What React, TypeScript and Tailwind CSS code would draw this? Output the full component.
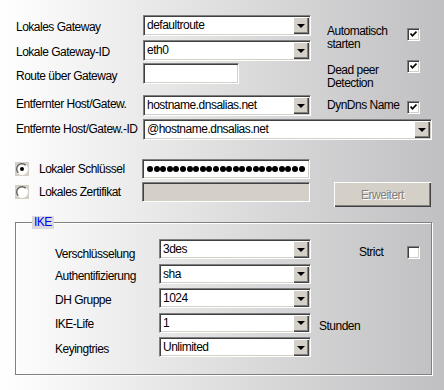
import React from 'react';

const sunken =
  'border border-t-[#808080] border-l-[#808080] border-b-white border-r-white shadow-[inset_1px_1px_0_#404040,inset_-1px_-1px_0_#d4d0c8]';

const Combo: React.FC<{ value: string; className?: string }> = ({ value, className = '' }) => (
  <div className={`flex h-[21px] bg-white p-px ${sunken} ${className}`}>
    <span className="flex-1 truncate pl-[2px] leading-[17px] text-black">{value}</span>
    <div className="flex h-[17px] w-[16px] items-center justify-center bg-[#d4d0c8] shadow-[inset_1px_1px_0_#fff,inset_-1px_-1px_0_#404040,inset_-2px_-2px_0_#808080]">
      <div className="h-0 w-0 border-x-[4px] border-t-[4px] border-x-transparent border-t-black" />
    </div>
  </div>
);

const Check: React.FC<{ on?: boolean }> = ({ on }) => (
  <div className={`flex h-[13px] w-[13px] items-center justify-center bg-white ${sunken}`}>
    {on && (
      <svg width="7" height="7" viewBox="0 0 7 7">
        <path d="M0.5 2.5 L2.5 4.8 L6.5 0.6" fill="none" stroke="black" strokeWidth="1.7" />
      </svg>
    )}
  </div>
);

const Radio: React.FC<{ on?: boolean }> = ({ on }) => (
  <div className="flex h-[14px] w-[14px] items-center justify-center bg-[#d4d0c8]">
    <svg width="12" height="12" viewBox="0 0 12 12">
      <defs>
        <linearGradient id="rg" x1="0" y1="0" x2="1" y2="1">
          <stop offset="0.45" stopColor="#606060" />
          <stop offset="0.55" stopColor="#ffffff" />
        </linearGradient>
      </defs>
      <circle cx="6" cy="6" r="5.3" fill="white" stroke="url(#rg)" strokeWidth="1.4" />
      {on && <circle cx="6" cy="6" r="2" fill="black" />}
    </svg>
  </div>
);

const Label: React.FC<{ text: string; className?: string }> = ({ text, className = '' }) => (
  <span className={`block leading-[13px] text-black ${className}`}>{text}</span>
);

const ikeRows = [
  { label: 'Verschlüsselung', value: '3des', lm: 'mt-[9px]' },
  { label: 'Authentifizierung', value: 'sha', lm: 'mt-[6px]' },
  { label: 'DH Gruppe', value: '1024', lm: 'mt-[6px]' },
  { label: 'IKE-Life', value: '1', lm: 'mt-[5px]' },
  { label: 'Keyingtries', value: 'Unlimited', lm: 'mt-[6px]' },
];

const dots = Array.from({ length: 24 });

export default function App() {
  return (
    <div className="h-[390px] w-[444px] overflow-hidden bg-linear-to-r from-white to-[#c0bfc1] pt-[15px] font-['Liberation_Sans',Arial,sans-serif] text-[12px] tracking-[-0.5px]">
      {/* top block */}
      <div className="flex">
        <div className="flex w-[311px] flex-col pl-[16px]">
          <div className="flex items-start">
            <Label text="Lokales Gateway" className="mt-[6px] w-[127px]" />
            <Combo value="defaultroute" className="w-[168px]" />
          </div>
          <div className="mt-[4px] flex items-start">
            <Label text="Lokale Gateway-ID" className="mt-[6px] w-[127px]" />
            <Combo value="eth0" className="w-[168px]" />
          </div>
          <div className="mt-[2px] flex items-start">
            <Label text="Route über Gateway" className="mt-[7px] w-[127px]" />
            <div className={`h-[21px] w-[96px] bg-white ${sunken}`} />
          </div>
          <div className="mt-[11px] flex items-start">
            <Label text="Entfernter Host/Gatew." className="mt-[3px] w-[127px]" />
            <Combo value="hostname.dnsalias.net" className="w-[168px]" />
          </div>
        </div>
        <div className="ml-[16px] grid w-[104px] grid-cols-[80px_13px] items-start">
          <Label text="Automatisch starten" className="mt-[10px]" />
          <div className="mt-[13px]"><Check on /></div>
          <Label text="Dead peer Detection" className="mt-[11px]" />
          <div className="mt-[7px]"><Check on /></div>
          <Label text="DynDns Name" className="mt-[7px]" />
          <div className="mt-[9px]"><Check on /></div>
        </div>
      </div>
      <div className="mt-[3px] flex items-start pl-[16px]">
        <Label text="Entfernte Host/Gatew.-ID" className="mt-[4px] w-[127px]" />
        <Combo value="@hostname.dnsalias.net" className="w-[289px]" />
      </div>

      {/* key selection */}
      <div className="mt-[19px] flex items-center pl-[15px]">
        <Radio on />
        <Label text="Lokaler Schlüssel" className="ml-[10px] w-[103px]" />
        <div className={`flex h-[20px] w-[168px] items-center gap-[0.6px] bg-white pl-[4px] ${sunken}`}>
          {dots.map((_, i) => (
            <span key={i} className="h-[6px] w-[6px] rounded-full bg-black" />
          ))}
        </div>
      </div>
      <div className="mt-[3px] flex items-start pl-[15px]">
        <div className="flex h-[20px] items-center">
          <Radio />
        </div>
        <Label text="Lokales Zertifikat" className="ml-[10px] mt-[4px] w-[103px]" />
        <div className={`h-[20px] w-[168px] bg-[#d4d0c8] ${sunken}`} />
        <button className="ml-[24px] flex h-[25px] w-[97px] items-center justify-center bg-[#d4d0c8] text-[#808080] shadow-[inset_1px_1px_0_#fff,inset_-1px_-1px_0_#404040,inset_-2px_-2px_0_#808080] [text-shadow:1px_1px_0_#fff]">
          Erweitert
        </button>
      </div>

      {/* IKE group */}
      <div className="relative ml-[15px] mt-[15px] h-[153px] w-[417px] border border-[#808080] pl-[39px] pt-[16px] shadow-[inset_1px_1px_0_#fff,1px_1px_0_#fff]">
        <span className="absolute -top-[7px] left-[16px] bg-[#dad8da] px-[2px] leading-[13px] text-[#0000ff]">
          IKE
        </span>
        <div className="flex flex-col gap-[4.5px]">
          {ikeRows.map((r, i) => (
            <div key={r.label} className="flex h-[20px] items-start">
              <Label text={r.label} className={`w-[104px] ${r.lm}`} />
              <Combo value={r.value} className="!h-[20px] w-[152px]" />
              {i === 0 && (
                <div className="ml-[48px] mt-[7px] flex w-[61px] items-start justify-between">
                  <Label text="Strict" />
                  <Check />
                </div>
              )}
              {i === 3 && <Label text="Stunden" className="ml-[8px] mt-[7px]" />}
            </div>
          ))}
        </div>
      </div>
    </div>
  );
}
